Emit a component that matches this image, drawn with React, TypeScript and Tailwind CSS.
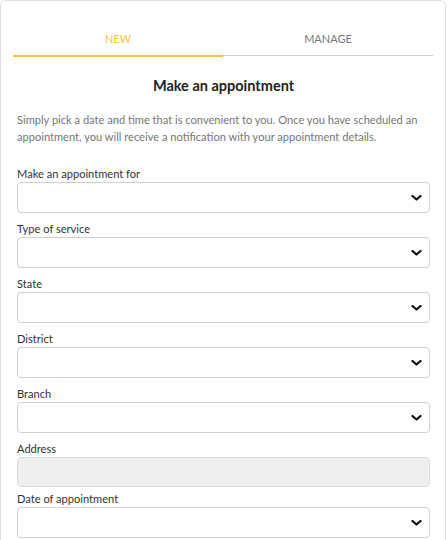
import React from "react";

const Chevron = () => (
  <svg width="11" height="7" viewBox="0 0 11 7" className="absolute right-[7px] top-1/2 -translate-y-1/2">
    <polyline points="1.5,1.5 5.5,5 9.5,1.5" fill="none" stroke="#111" strokeWidth="2.3" strokeLinecap="round" strokeLinejoin="round" />
  </svg>
);

const SelectField = ({ label }: { label: string }) => (
  <div className="flex flex-col">
    <label className="text-[11.1px] leading-[16px] text-[#333]">{label}</label>
    <div className="relative h-[31px] rounded-[4px] border border-[#cfcfcf] bg-white">
      <Chevron />
    </div>
  </div>
);

export default function App() {
  return (
    <div className="w-[448px] h-[540px] bg-white overflow-hidden" style={{ fontFamily: "Lato, 'Open Sans', sans-serif" }}>
      <div className="w-[446px] min-h-[560px] border border-[#dedede] rounded-t-[6px] bg-white">
        <div className="mx-[12px] mt-[22px] flex">
          <div className="flex-1 flex justify-center items-center h-[34px] border-b-2 border-[#f5c442] text-[11px] text-[#f5c442]">
            NEW
          </div>
          <div className="flex-1 flex flex-col">
            <div className="flex justify-center items-center h-[33px] border-b border-[#cfcfcf] text-[11px] text-[#777]">
              MANAGE
            </div>
          </div>
        </div>
        <div className="pl-[16px] pr-[15px]">
          <h1 className="mt-[19px] text-center text-[14.5px] leading-[20px] font-bold text-[#222]">Make an appointment</h1>
          <p className="mt-[15px] text-[11.1px] leading-[17px] text-[#777]">
            Simply pick a date and time that is convenient to you. Once you have scheduled an appointment, you will receive a notification with your appointment details.
          </p>
          <div className="mt-[21px] flex flex-col gap-[8px]">
            <SelectField label="Make an appointment for" />
            <SelectField label="Type of service" />
            <SelectField label="State" />
            <SelectField label="District" />
            <SelectField label="Branch" />
            <div className="flex flex-col">
              <label className="text-[11.1px] leading-[16px] text-[#333]">Address</label>
              <div className="h-[30px] rounded-[4px] border border-[#dcdcdc] bg-[#eeeeee]" />
            </div>
            <div className="-mt-[4px]">
              <SelectField label="Date of appointment" />
            </div>
          </div>
        </div>
      </div>
    </div>
  );
}
